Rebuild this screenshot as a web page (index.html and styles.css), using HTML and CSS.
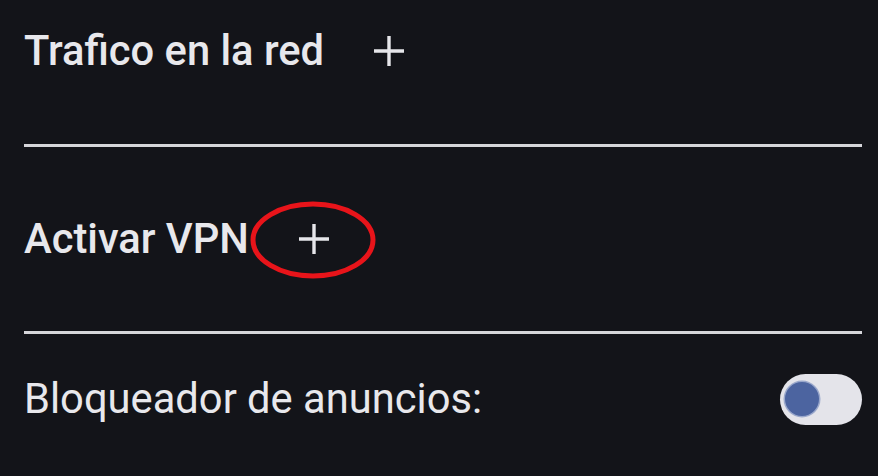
FILE: index.html
```html
<!DOCTYPE html>
<html lang="es">
<head>
<meta charset="utf-8">
<link rel="stylesheet" href="styles.css">
</head>
<body>
<div class="screen">
  <div class="row row-first">
    <span class="label strong">Trafico en la red</span>
    <span class="plus">
      <svg width="32" height="32" viewBox="0 0 32 32"><path d="M16 1v30M1 16h30" stroke="#e6e6ea" stroke-width="3.4" fill="none"/></svg>
    </span>
  </div>
  <div class="divider"></div>
  <div class="row row-second">
    <span class="label strong">Activar VPN</span>
    <span class="plus plus-marked">
      <svg width="32" height="32" viewBox="0 0 32 32"><path d="M16 1v30M1 16h30" stroke="#e6e6ea" stroke-width="3.4" fill="none"/></svg>
      <svg class="ring" width="126" height="78" viewBox="0 0 126 78"><ellipse cx="63" cy="39" rx="60" ry="36" stroke="#e8141a" stroke-width="5" fill="none"/></svg>
    </span>
  </div>
  <div class="divider"></div>
  <div class="row row-third">
    <span class="label regular">Bloqueador de anuncios:</span>
    <span class="toggle"><span class="knob"></span></span>
  </div>
</div>
</body>
</html>
```
FILE: styles.css
```css
html, body {
  margin: 0;
  padding: 0;
  background: #131419;
}
.screen {
  width: 878px;
  height: 476px;
  box-sizing: border-box;
  padding: 0 16px 0 24px;
  display: flex;
  flex-direction: column;
  font-family: Roboto, "Noto Sans", sans-serif;
  color: #e8e8ec;
  overflow: hidden;
}
.row {
  display: flex;
  align-items: center;
}
.row-first {
  height: 48px;
  margin-top: 27px;
  margin-bottom: 69px;
}
.row-second {
  height: 48px;
  margin-top: 68px;
  margin-bottom: 68px;
}
.row-third {
  height: 52px;
  margin-top: 39px;
}
.label {
  font-size: 41.7px;
  line-height: 48px;
  white-space: nowrap;
}
.strong {
  font-weight: 500;
}
.regular {
  font-weight: 400;
  flex: 1;
}
.plus {
  display: flex;
  margin-left: 49px;
  position: relative;
}
.plus-marked .ring {
  position: absolute;
  left: -48px;
  top: -22px;
}
.divider {
  height: 3px;
  background: #d6d6da;
}
.toggle {
  width: 82px;
  height: 51px;
  border-radius: 26px;
  background: #e4e4ea;
  display: flex;
  align-items: center;
  padding-left: 5px;
  box-sizing: border-box;
}
.knob {
  width: 34px;
  height: 34px;
  border-radius: 50%;
  background: #4c64a0;
  box-shadow: 0 0 0 1.5px #9aa8cc;
}
```
